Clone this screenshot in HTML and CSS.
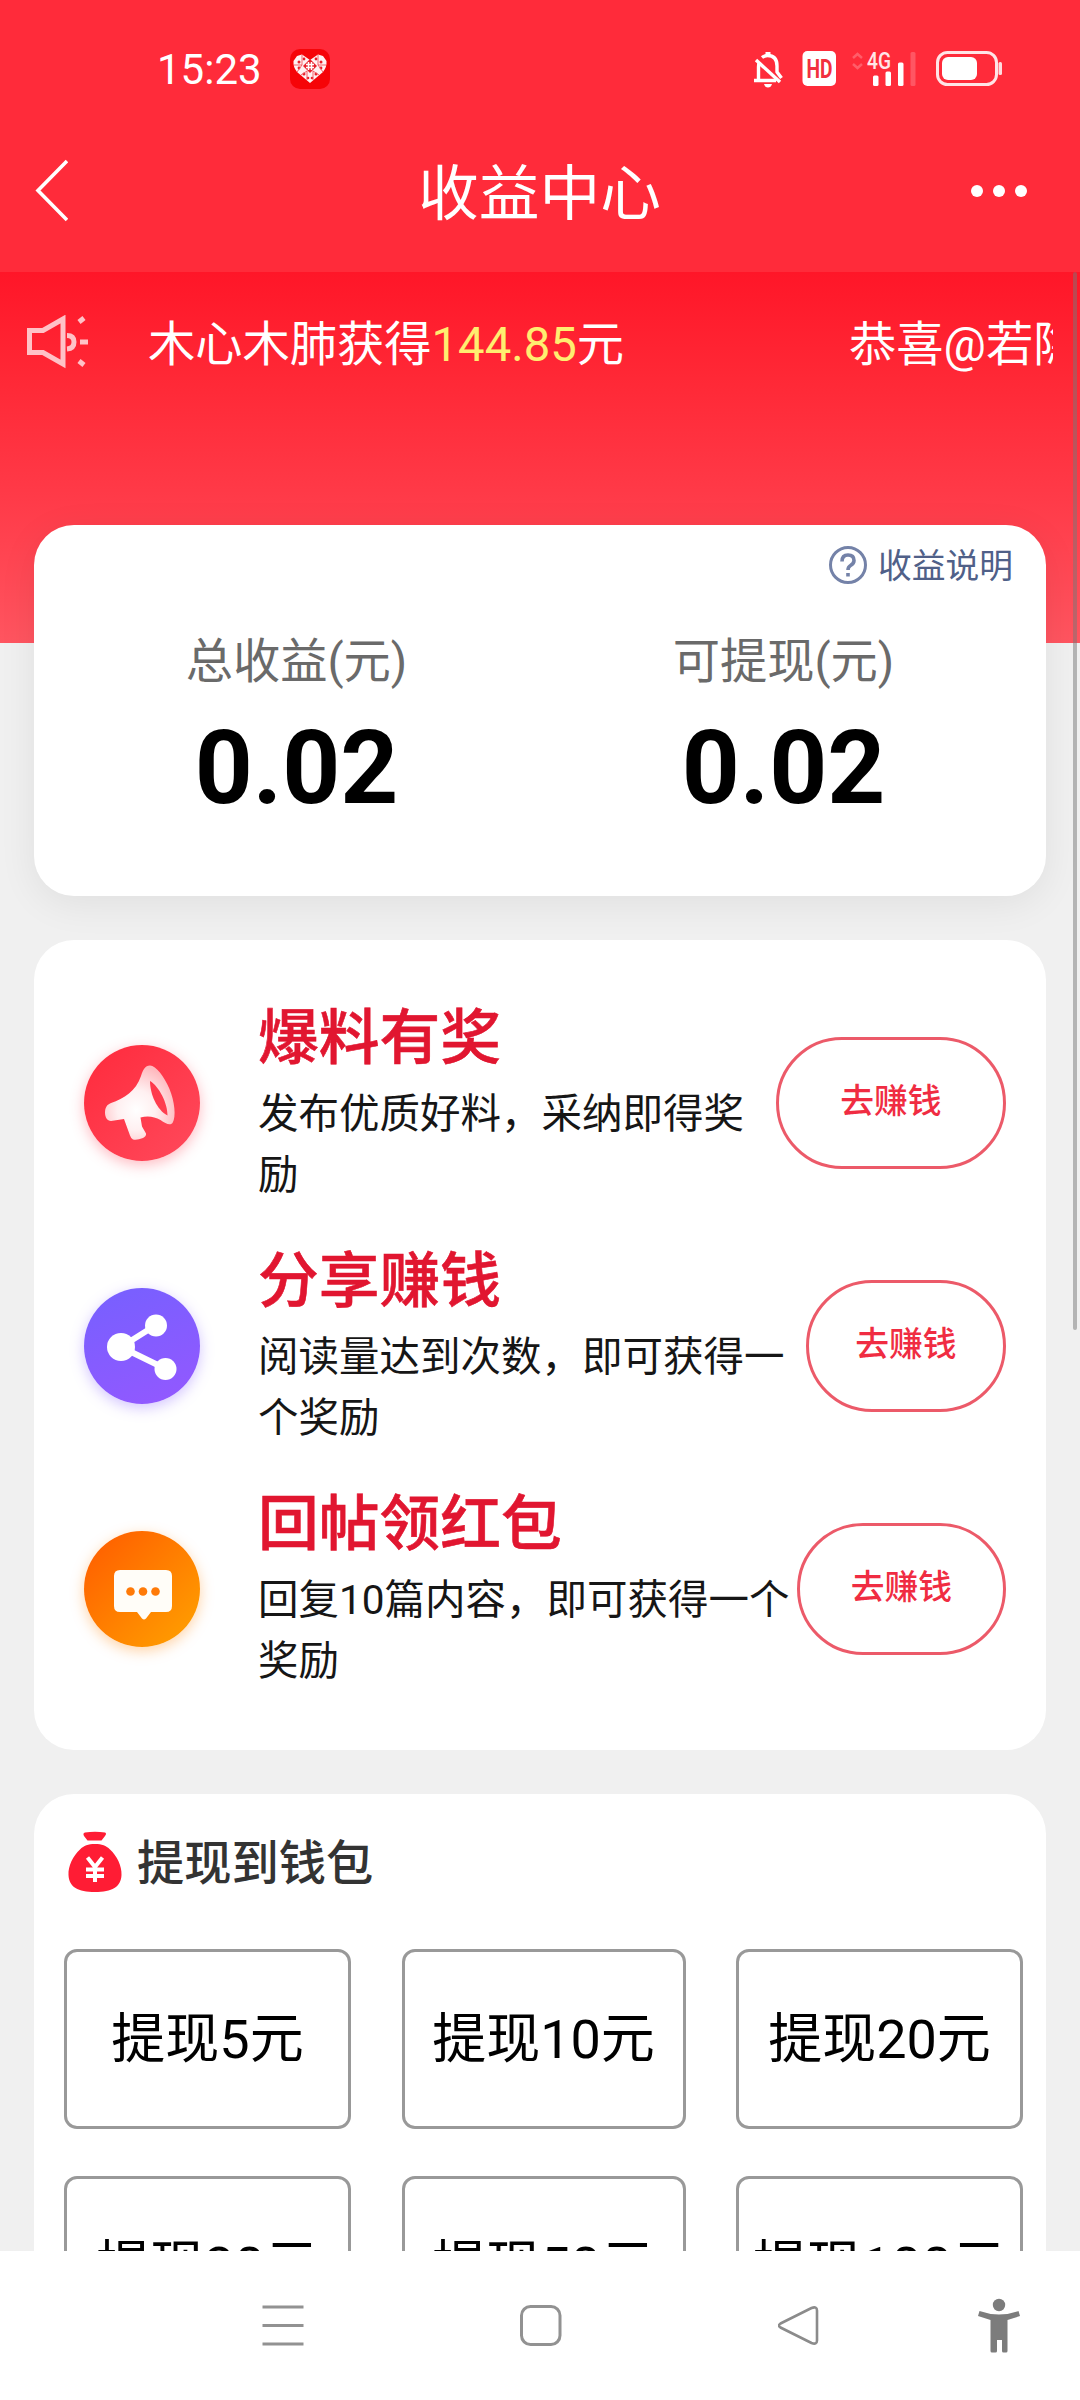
FILE: index.html
```html
<!DOCTYPE html>
<html lang="zh-CN">
<head>
<meta charset="utf-8">
<title>收益中心</title>
<link rel="stylesheet" href="styles.css">
</head>
<body>
<div class="screen">
  <header class="header">
    <div class="status">
      <span class="clock">15:23</span>
      <svg class="app-badge" width="40" height="40" viewBox="0 0 40 40">
        <rect width="40" height="40" rx="10" fill="#f60408"/>
        <path d="M20 34L7 23Q3 18 3.500 12L7 7L12 5.500L20 11L28 5.500L33 7L36.500 12Q37 18 33 23Z" fill="#fff2f2"/>
        <g fill="#e8202a">
          <circle cx="9" cy="13" r="1.500"/><circle cx="14" cy="10" r="1.400"/><circle cx="26" cy="10" r="1.400"/><circle cx="31" cy="13" r="1.500"/>
          <circle cx="9" cy="19" r="1.400"/><circle cx="31" cy="19" r="1.400"/><circle cx="14" cy="25" r="1.500"/><circle cx="26" cy="25" r="1.500"/>
          <circle cx="18" cy="29" r="1.300"/><circle cx="22" cy="29" r="1.300"/>
          <path d="M20 10l7 7-7 7-7-7z"/>
        </g>
        <g fill="none" stroke="#f2545c" stroke-width=".9"><path d="M4 16h8l-5 7M12 16V6M28 6v10h8M28 16l5 7M11 26l6-4v9M29 26l-6-4v9"/></g>
        <path d="M16 15.500h8M16 18.500h8M18.500 13v8M21.500 13v8" stroke="#fff" stroke-width="1.500"/>
      </svg>
      <svg class="status-icons" width="256" height="40" viewBox="748 49 256 40">
        <g fill="none" stroke="#fff" stroke-width="3.400" stroke-linejoin="round">
          <path d="M754 80.500h22M758.500 80V67q0-3 1-5M762 57.500q2.500-2 5.500-2 9.500 0 9.500 10.500v6l4.500 6"/>
          <path d="M756 60l24 22" />
        </g>
        <path d="M765.500 52h5v4h-5zM764 84h8q-1 3.500-4 3.500t-4-3.500z" fill="#fff"/>
        <rect x="802.500" y="51" width="33.500" height="35" rx="5" fill="#fff"/>
        <text class="hd" x="819.500" y="77.500" textLength="26" lengthAdjust="spacingAndGlyphs">HD</text>
        <g fill="none" stroke="#ff5d69" stroke-width="2.500"><path d="M853 58l4.500-4 4.500 4M853 64l4.500 4 4.500-4"/></g>
        <text class="net" x="879" y="68.500" textLength="24" lengthAdjust="spacingAndGlyphs">4G</text>
        <g fill="#fff"><rect x="873" y="75.500" width="5.500" height="10.500" rx="1.500"/><rect x="885.500" y="71.500" width="5.500" height="14.500" rx="1.500"/><rect x="898" y="62.500" width="5.500" height="23.500" rx="1.500"/></g>
        <rect x="910.500" y="52" width="5" height="34" rx="1.500" fill="#ff5663"/>
        <rect x="937.500" y="52.500" width="59" height="32" rx="10" fill="none" stroke="#ffe4e6" stroke-width="3"/>
        <rect x="942" y="57" width="35" height="23" rx="6" fill="#fff"/>
        <rect x="998.500" y="62" width="3.500" height="13" rx="1.500" fill="#ffdcdf"/>
      </svg>
    </div>
    <div class="titlebar">
      <svg width="34" height="64" viewBox="0 0 34 64"><path d="M33 2L4 31.500 33 61" fill="none" stroke="#fff" stroke-width="3.600"/></svg>
      <h1 class="title">收益中心</h1>
      <svg width="58" height="14" viewBox="0 0 58 14" fill="#fff"><circle cx="7" cy="7" r="6"/><circle cx="29" cy="7" r="6"/><circle cx="51" cy="7" r="6"/></svg>
    </div>
  </header>

  <main class="content">
    <section class="banner">
      <svg class="horn" width="62" height="54" viewBox="0 0 62 54">
        <g fill="none" stroke="#ffc2c7" stroke-width="5">
          <path d="M2.500 15.500h13.500L36 4v45L16 37.500H2.500z"/>
          <path d="M40 20.500q7 0 7 6.500t-7 7"/>
          <path d="M53 27h8M52 7l5-4M52 46l5 4"/>
        </g>
      </svg>
      <div class="marquee">
        <span>木心木肺获得<b class="amount">144.85</b>元</span>
        <span>恭喜@若隐若现</span>
      </div>
    </section>

    <section class="card summary">
      <div class="help">
        <svg width="40" height="40" viewBox="0 0 40 40" fill="none" stroke="#7482a8" stroke-width="3">
          <circle cx="20" cy="20" r="17.500"/>
          <path d="M14 16.500q0-6.500 6-6.500t6 5.500q0 3-3.500 5-2.500 1.500-2.500 4.500M20 28v3.500" stroke-width="3.600"/>
        </svg>
        <span>收益说明</span>
      </div>
      <div class="figures">
        <div class="figure"><span class="label">总收益(元)</span><strong class="value">0.02</strong></div>
        <div class="figure"><span class="label">可提现(元)</span><strong class="value">0.02</strong></div>
      </div>
    </section>

    <section class="card tasks">
      <div class="task">
        <div class="icon icon-red">
          <svg width="116" height="116" viewBox="0 0 116 116">
            <defs><radialGradient id="horn" cx=".45" cy=".6" r=".6"><stop offset="0" stop-color="#fff"/><stop offset=".45" stop-color="#fff0f1"/><stop offset="1" stop-color="#ffb9be"/></radialGradient></defs>
            <path fill="url(#horn)" fill-rule="evenodd" d="M66 20.500C72 21 80 31 85.500 44c5 12 7 28 3 34-2.500 3-7 .5-12-3-6-3.500-13-4.500-20-2.500l1.500 9 4 7q.5 2.500-3 4.500-6 2.500-10 1.500-2-1-3-4l-6-16.500-13 2c-4 0-6-4-6-8.500 0-5 2-8 6-9.500C40 53.500 52 46 57 31c2-6 4-10.500 9-10.500zM66 36c0 13 7 29 17.500 34.500C84 59 75 41 66 36z"/>
          </svg>
        </div>
        <div class="text"><h2>爆料有奖</h2><p>发布优质好料，采纳即得奖<br>励</p></div>
        <button class="go go-wide">去赚钱</button>
      </div>
      <div class="task">
        <div class="icon icon-purple">
          <svg width="116" height="116" viewBox="0 0 116 116" fill="#fff">
            <path d="M37 59L72 37M37 59L82 81" stroke="#fff" stroke-width="6"/>
            <circle cx="37" cy="59" r="14"/><circle cx="72" cy="37.500" r="11"/><circle cx="81.500" cy="81" r="11"/>
          </svg>
        </div>
        <div class="text"><h2>分享赚钱</h2><p>阅读量达到次数，即可获得一<br>个奖励</p></div>
        <button class="go go-narrow">去赚钱</button>
      </div>
      <div class="task">
        <div class="icon icon-orange">
          <svg width="116" height="116" viewBox="0 0 116 116">
            <path d="M36 39h46q6 0 6 6v30q0 6-6 6H67l-5 6.500q-2 2-4 0L53 81H36q-6 0-6-6V45q0-6 6-6z" fill="#fffdf8"/>
            <g fill="#ff7a08"><circle cx="46.500" cy="60.500" r="4.300"/><circle cx="59" cy="60.500" r="4.300"/><circle cx="71.500" cy="60.500" r="4.300"/></g>
          </svg>
        </div>
        <div class="text"><h2>回帖领红包</h2><p>回复10篇内容，即可获得一个<br>奖励</p></div>
        <button class="go go-mid">去赚钱</button>
      </div>
    </section>

    <section class="card wallet">
      <div class="wallet-head">
        <svg width="54" height="62" viewBox="0 0 54 62">
          <path d="M17 1.500Q27 0 37 1.500q2 1 0 3.500l-3.500 4.500h-14L16 5q-1.500-3 1-3.500z" fill="#ff1c34"/>
          <path d="M27 13c7 0 11 1.500 15 5.500C49 25 54 35 53.500 44 53 56 44 61 27 61S1 56 .5 44C0 35 5 25 12 18.500 16 14.500 20 13 27 13z" fill="#ff1c34"/>
          <path d="M19.500 26.500L27 36l7.500-9.500M27 36v15M18 38.500h18M18 45h18" fill="none" stroke="#fff" stroke-width="4"/>
        </svg>
        <h3>提现到钱包</h3>
      </div>
      <div class="options">
        <div class="option">提现5元</div><div class="option">提现10元</div><div class="option">提现20元</div>
        <div class="option">提现30元</div><div class="option">提现50元</div><div class="option">提现100元</div>
      </div>
    </section>
    <i class="scrollbar"></i>
  </main>

  <nav class="navbar">
    <svg width="42" height="48" viewBox="0 0 42 48"><path d="M.5 5h41M.5 23.500h41M.5 42h41" stroke="#929292" stroke-width="3"/></svg>
    <svg width="42" height="48" viewBox="0 0 42 48"><rect x="1.500" y="4.500" width="38.500" height="38" rx="9" fill="none" stroke="#929292" stroke-width="3"/></svg>
    <svg width="42" height="48" viewBox="0 0 42 48"><path d="M2.500 21.500L33.500 6Q39 4 39 8.500v30q0 4.500-5.500 2.500L2.500 25.500q-3-2 0-4z" fill="none" stroke="#8b8b8b" stroke-width="2.600"/></svg>
    <svg width="42" height="56" viewBox="0 0 42 56" fill="#7c7c7c"><circle cx="21" cy="7" r="6.200"/><path d="M1.500 13Q21 20 40.500 13l1.500 5-12.500 4V53q0 1.500-1.500 1.500h-2.500Q24 54.500 24 53V42h-5v11q0 1.500-1.500 1.500H14q-1.500 0-1.500-1.500V22L0 18z"/></svg>
  </nav>
</div>
</body>
</html>
```
FILE: styles.css
```css
* { box-sizing: border-box; }
body { margin: 0; font-family: Roboto, "Noto Sans CJK SC", sans-serif; }
h1, h2, h3, p { margin: 0; font-weight: 400; }
svg { display: block; flex: none; }

.screen { width: 1080px; height: 2400px; display: flex; flex-direction: column; overflow: hidden; background: #f0f0f0; }

.header { height: 272px; flex: none; background: #ff2b3a; color: #fff; }
.status { height: 138px; padding: 0 76px 0 157px; display: flex; align-items: center; }
.clock { width: 133px; padding-top: 1px; font-size: 42px; line-height: 48px; white-space: nowrap; }
.app-badge { margin-right: auto; }
.hd { font: 700 26px Roboto, sans-serif; fill: #f2303e; text-anchor: middle; }
.net { font: 500 23px Roboto, sans-serif; fill: #ffe6e8; text-anchor: middle; }
.titlebar { height: 106px; padding: 0 52px 0 34px; display: flex; align-items: center; justify-content: space-between; }
.title { font-size: 60.750px; line-height: 90px; margin-left: 41px; padding-top: 8px; }

.content { position: relative; height: 1979px; flex: none; overflow: hidden; }
.banner {
  height: 371px; padding: 42px 27px 0; display: flex; align-items: flex-start; color: #fff;
  background: linear-gradient(#ff1628 0, #ff2735 100px, #ff3a48 225px, #ff5560 371px);
}
.horn { margin: 1px 59px 0 0; }
.marquee { display: flex; flex: 1; gap: 225px; overflow: hidden; white-space: nowrap; font-size: 47.250px; line-height: 62px; }
.marquee span { flex: none; }
.amount { font-weight: 400; color: #ffee70; }

.card { margin: 0 34px 44px; background: #fff; border-radius: 40px; }
.summary { height: 371px; margin-top: -118px; position: relative; padding: 20px 33px 0 19px; box-shadow: 0 8px 38px rgba(0, 0, 0, .07); }
.help { display: flex; justify-content: flex-end; align-items: center; gap: 10px; height: 40px; font-size: 33.750px; color: #506088; }
.help span { padding-bottom: 4px; }
.figures { display: flex; width: 974px; margin-top: 42px; }
.figure { flex: 1; display: flex; flex-direction: column; align-items: center; }
.label { font-size: 47.250px; line-height: 70px; color: #6a6a6a; }
.value { font-size: 101.250px; line-height: 120px; margin-top: 12px; }

.tasks { height: 810px; padding: 41px 40px 0 50px; }
.task { height: 243px; display: flex; align-items: center; }
.icon { width: 116px; height: 116px; flex: none; border-radius: 50%; }
.icon-red { background: linear-gradient(135deg, #ff2a3c, #ff4a5c); box-shadow: 0 4px 14px rgba(255, 60, 80, .35); }
.icon-purple { background: linear-gradient(160deg, #7660ff, #9458ff); box-shadow: 0 4px 14px rgba(130, 90, 255, .35); }
.icon-orange { background: linear-gradient(135deg, #ff5a00, #ffa300); box-shadow: 0 4px 14px rgba(255, 130, 0, .35); }
.text { flex: 1; margin: 0 0 5px 58px; min-width: 0; white-space: nowrap; }
.text h2 { font-size: 60.750px; line-height: 90px; font-weight: 500; color: #e11630; -webkit-text-stroke: .6px #e11630; }
.text p { font-size: 40.500px; line-height: 60.750px; color: #161616; }
.go {
  flex: none; height: 132px; padding: 0 0 8px; border: 3px solid #ec5a69; border-radius: 66px; background: none;
  font: 500 33.750px Roboto, "Noto Sans CJK SC", sans-serif; color: #f02c42;
}
.go-wide { width: 230px; }
.go-narrow { width: 200px; }
.go-mid { width: 209px; }

.wallet { height: 700px; margin-bottom: 0; padding: 37px 23px 0 30px; }
.wallet-head { display: flex; align-items: center; gap: 15px; height: 62px; margin-left: 4px; }
.wallet-head h3 { font-size: 47.250px; font-weight: 500; line-height: 60px; padding-top: 4px; color: #333; }
.options { display: grid; grid-template-columns: 287px 284px 287px; justify-content: space-between; row-gap: 47px; margin-top: 56px; }
.option { height: 180px; padding-bottom: 10px; border: 3px solid #999; border-radius: 13px; display: flex; align-items: center; justify-content: center; font-size: 54px; color: #000; }
.scrollbar { position: absolute; right: 3px; top: 0; width: 4px; height: 1058px; background: rgba(120, 120, 120, .5); border-radius: 2px; }

.navbar { flex: 1; display: grid; grid-template-columns: 42px 42px 42px 42px; column-gap: 216px; align-items: center; padding-left: 261.500px; background: #fff; }
.navbar svg:last-child { margin-left: -58px; }
```
